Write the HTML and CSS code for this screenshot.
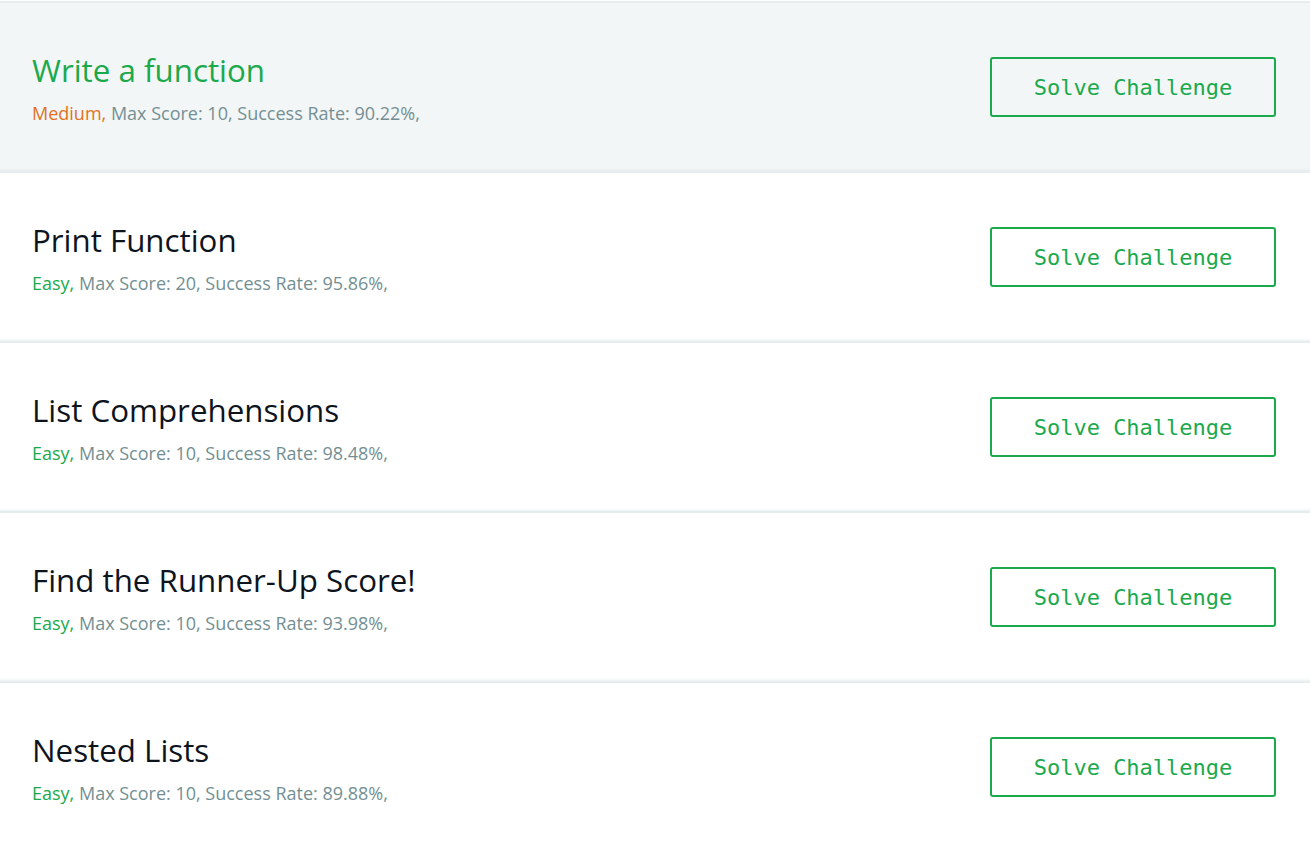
FILE: index.html
```html
<!DOCTYPE html>
<html lang="en">
<head>
<meta charset="utf-8">
<title>Challenges</title>
<link rel="stylesheet" href="styles.css">
</head>
<body>
<div class="challenge-list">
  <div class="challenge is-active">
    <div class="challenge-info">
      <h4 class="challenge-name">Write a function</h4>
      <div class="challenge-meta"><span class="diff medium">Medium,</span> Max Score: 10, Success Rate: 90.22%,</div>
    </div>
    <button class="solve-btn">Solve Challenge</button>
  </div>
  <div class="challenge">
    <div class="challenge-info">
      <h4 class="challenge-name">Print Function</h4>
      <div class="challenge-meta"><span class="diff easy">Easy,</span> Max Score: 20, Success Rate: 95.86%,</div>
    </div>
    <button class="solve-btn">Solve Challenge</button>
  </div>
  <div class="challenge">
    <div class="challenge-info">
      <h4 class="challenge-name">List Comprehensions</h4>
      <div class="challenge-meta"><span class="diff easy">Easy,</span> Max Score: 10, Success Rate: 98.48%,</div>
    </div>
    <button class="solve-btn">Solve Challenge</button>
  </div>
  <div class="challenge">
    <div class="challenge-info">
      <h4 class="challenge-name">Find the Runner-Up Score!</h4>
      <div class="challenge-meta"><span class="diff easy">Easy,</span> Max Score: 10, Success Rate: 93.98%,</div>
    </div>
    <button class="solve-btn">Solve Challenge</button>
  </div>
  <div class="challenge">
    <div class="challenge-info">
      <h4 class="challenge-name">Nested Lists</h4>
      <div class="challenge-meta"><span class="diff easy">Easy,</span> Max Score: 10, Success Rate: 89.88%,</div>
    </div>
    <button class="solve-btn">Solve Challenge</button>
  </div>
</div>
</body>
</html>
```
FILE: styles.css
```css
html, body {
  margin: 0;
  padding: 0;
  background: #ffffff;
  font-family: "Open Sans", "Liberation Sans", sans-serif;
}

.challenge-list {
  padding-top: 1px;
}

.challenge-list .challenge:first-child {
  border-top: 2px solid #e7ecee;
}

.challenge {
  display: flex;
  align-items: center;
  justify-content: space-between;
  height: 168px;
  padding: 0 34px 0 32px;
  border-bottom: 2px solid #e7ecee;
  box-shadow: inset 0 -3px 3px -2px rgba(220, 228, 230, 0.6);
}

.challenge.is-active {
  background: #f3f6f7;
}

.challenge-name {
  margin: 0;
  font-size: 31.3px;
  font-weight: 400;
  line-height: 40px;
  color: #0e141e;
}

.is-active .challenge-name {
  color: #1ba94c;
}

.challenge-meta {
  margin-top: 11px;
  font-size: 18px;
  line-height: 24px;
  color: #738f93;
}

.diff.medium {
  color: #e2711d;
}

.diff.easy {
  color: #1ba94c;
}

.solve-btn {
  box-sizing: border-box;
  width: 286px;
  height: 60px;
  background: transparent;
  border: 2px solid #1ba94c;
  border-radius: 3px;
  color: #1ba94c;
  font-family: "DejaVu Sans Mono", "Liberation Mono", monospace;
  font-size: 22px;
  padding: 0;
  cursor: pointer;
}
```
